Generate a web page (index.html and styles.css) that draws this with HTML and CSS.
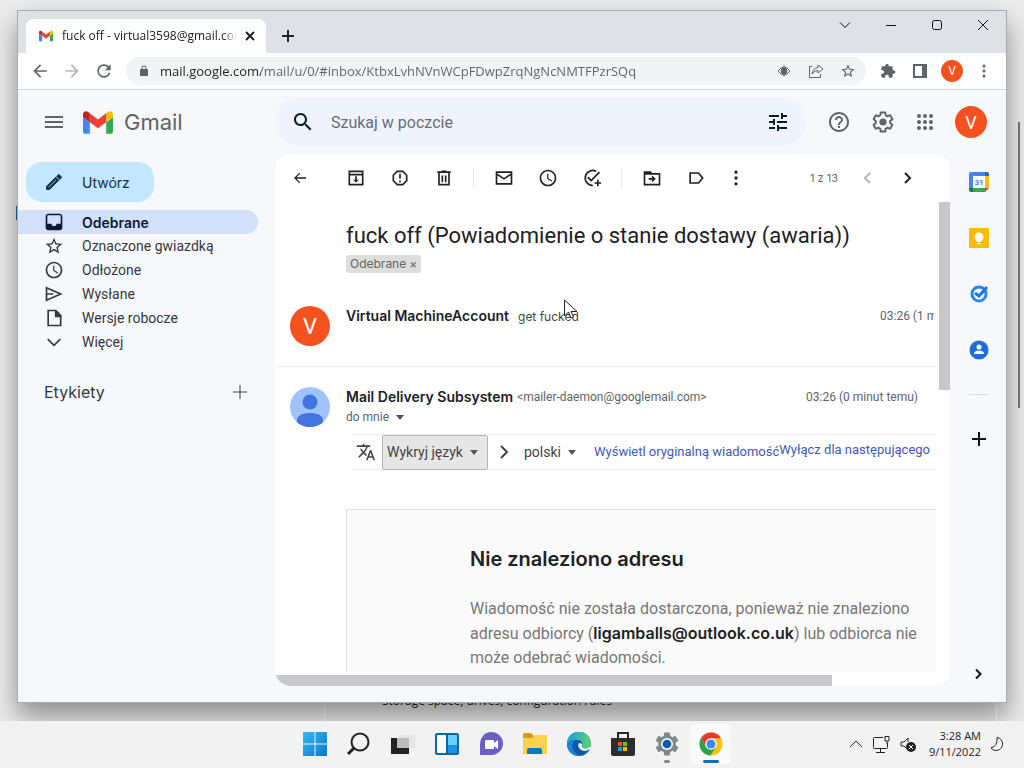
FILE: index.html
```html
<!DOCTYPE html>
<html lang="pl">
<head>
    <meta charset="utf-8">
    <title>Gmail</title>
    <link rel="stylesheet" href="styles.css">
</head>
<body>
<div class="desktop">
    <!-- Settings window behind the browser -->
    <div class="back-window">
        <div class="back-panel">Storage space, drives, configuration rules</div>
        <div class="back-scroll"></div>
    </div>
    <div class="back-marker"></div>

    <div class="window">
        <div class="tab-strip">
            <div class="tab">
                <svg class="favicon" viewBox="52 42 88 66"><path fill="#4285f4" d="M58 108h14V74L52 59v43c0 3.32 2.69 6 6 6"/><path fill="#34a853" d="M120 108h14c3.32 0 6-2.69 6-6V59l-20 15"/><path fill="#fbbc04" d="M120 48v26l20-15v-8c0-7.42-8.47-11.65-14.4-7.2"/><path fill="#ea4335" d="M72 74V48l24 18 24-18v26L96 92"/><path fill="#c5221f" d="M52 51v8l20 15V48l-5.6-4.2c-5.94-4.45-14.4-.22-14.4 7.2"/></svg>
                <span class="tab-title">fuck off - virtual3598@gmail.com - Gmail</span>
                <button class="tab-close" aria-label="Zamknij kartę"><svg class="i16" viewBox="0 0 16 16"><path class="line" d="M4 4l8 8M12 4l-8 8"/></svg></button>
            </div>
            <button class="new-tab" aria-label="Nowa karta"><svg class="i16" viewBox="0 0 16 16"><path class="line" d="M8 2v12M2 8h12"/></svg></button>
            <div class="window-controls">
                <button aria-label="Szukaj kart"><svg class="i16" viewBox="0 0 16 16"><path class="thin" d="M3 5.500l5 5 5-5"/></svg></button>
                <button aria-label="Minimalizuj"><svg class="i16" viewBox="0 0 16 16"><path class="thin" d="M3 8.500h10"/></svg></button>
                <button aria-label="Maksymalizuj"><svg class="i16" viewBox="0 0 16 16"><rect class="thin" x="3.500" y="3.500" width="9" height="9" rx="2"/></svg></button>
                <button aria-label="Zamknij"><svg class="i16" viewBox="0 0 16 16"><path class="thin" d="M3 3l10 10M13 3L3 13"/></svg></button>
            </div>
        </div>

        <div class="browser-bar">
            <button aria-label="Wstecz"><svg class="i20" viewBox="0 0 24 24"><path d="M20 11H7.830l5.590-5.590L12 4l-8 8 8 8 1.410-1.410L7.830 13H20v-2z"/></svg></button>
            <button class="disabled" aria-label="Dalej"><svg class="i20" viewBox="0 0 24 24"><path d="M12 4l-1.410 1.410L16.170 11H4v2h12.170l-5.580 5.590L12 20l8-8z"/></svg></button>
            <button aria-label="Odśwież"><svg class="i20" viewBox="0 0 24 24"><path d="M17.65 6.35C16.2 4.9 14.21 4 12 4c-4.42 0-7.99 3.58-7.99 8s3.57 8 7.99 8c3.73 0 6.84-2.55 7.73-6h-2.08c-.82 2.33-3.04 4-5.65 4-3.31 0-6-2.69-6-6s2.69-6 6-6c1.66 0 3.14.69 4.22 1.78L13 11h7V4l-2.35 2.35z"/></svg></button>
            <div class="omnibox">
                <svg class="i12" viewBox="0 0 24 24"><path d="M18 8h-1V6c0-2.760-2.240-5-5-5S7 3.240 7 6v2H6c-1.100 0-2 .9-2 2v10c0 1.100.9 2 2 2h12c1.100 0 2-.9 2-2V10c0-1.100-.9-2-2-2zM9 8V6c0-1.660 1.340-3 3-3s3 1.340 3 3v2H9z"/></svg>
                <input class="url" type="text" aria-label="Adres" value="mail.google.com/mail/u/0/#inbox/KtbxLvhNVnWCpFDwpZrqNgNcNMTFPzrSQq">
                <button aria-label="Śledzenie"><svg class="i16" viewBox="0 0 16 16"><path class="line-s" d="M2 8q6-8 12 0q-6 8-12 0z"/><circle cx="8" cy="8" r="3.200"/><path class="line-s" d="M8 2.500v11"/></svg></button>
                <button aria-label="Udostępnij"><svg class="i16" viewBox="0 0 16 16"><path class="line-s" d="M4 3.500H1.500v11h11V11M10 2l5 4-5 4V7.500Q6 7.500 4 11 5 5 10 4.500z"/></svg></button>
                <button aria-label="Dodaj zakładkę"><svg class="i16" viewBox="0 0 24 24"><path d="M22 9.240l-7.190-.62L12 2 9.190 8.630 2 9.240l5.460 4.730L5.820 21 12 17.270 18.180 21l-1.630-7.030L22 9.240zM12 15.400l-3.760 2.270 1-4.280-3.320-2.880 4.380-.38L12 6.100l1.710 4.040 4.380.38-3.320 2.880 1 4.280L12 15.400z"/></svg></button>
            </div>
            <button aria-label="Rozszerzenia"><svg class="i16" viewBox="0 0 24 24"><path d="M20.5 11H19V7c0-1.100-.9-2-2-2h-4V3.500C13 2.120 11.880 1 10.500 1S8 2.120 8 3.500V5H4c-1.100 0-1.990.9-1.990 2v3.800H3.500c1.490 0 2.700 1.210 2.700 2.700s-1.210 2.700-2.700 2.700H2V20c0 1.100.9 2 2 2h3.800v-1.500c0-1.490 1.210-2.700 2.700-2.700 1.490 0 2.700 1.210 2.700 2.700V22H17c1.100 0 2-.9 2-2v-4h1.500c1.380 0 2.500-1.120 2.500-2.500S21.880 11 20.500 11z"/></svg></button>
            <button aria-label="Panel boczny"><svg class="i16" viewBox="0 0 16 16"><path fill-rule="evenodd" d="M1 1h14v14H1zM3 3v10h7V3z"/></svg></button>
            <button aria-label="Profil"><span class="avatar small">V</span></button>
            <button aria-label="Menu"><svg class="i16" viewBox="0 0 16 16"><circle cx="8" cy="3" r="1.500"/><circle cx="8" cy="8" r="1.500"/><circle cx="8" cy="13" r="1.500"/></svg></button>
        </div>

        <div class="gmail">
            <header class="header">
                <div class="brand">
                    <button aria-label="Menu główne"><svg class="i20" viewBox="0 0 20 20"><path class="line" d="M1 5h18M1 10h18M1 15h18"/></svg></button>
                    <svg class="logo" viewBox="52 42 88 66"><path fill="#4285f4" d="M58 108h14V74L52 59v43c0 3.32 2.69 6 6 6"/><path fill="#34a853" d="M120 108h14c3.32 0 6-2.69 6-6V59l-20 15"/><path fill="#fbbc04" d="M120 48v26l20-15v-8c0-7.42-8.47-11.65-14.4-7.2"/><path fill="#ea4335" d="M72 74V48l24 18 24-18v26L96 92"/><path fill="#c5221f" d="M52 51v8l20 15V48l-5.6-4.2c-5.94-4.45-14.4-.22-14.4 7.2"/></svg>
                    <span class="brand-name">Gmail</span>
                </div>
                <form class="search">
                    <button type="button" aria-label="Szukaj"><svg class="i24" viewBox="0 0 24 24"><path d="M15.500 14h-.79l-.28-.27C15.410 12.590 16 11.110 16 9.500 16 5.910 13.090 3 9.500 3S3 5.910 3 9.500 5.910 16 9.500 16c1.610 0 3.090-.59 4.230-1.570l.27.28v.79l5 4.990L20.490 19l-4.990-5zm-6 0C7.010 14 5 11.990 5 9.500S7.010 5 9.500 5 14 7.010 14 9.500 11.990 14 9.500 14z"/></svg></button>
                    <input type="search" placeholder="Szukaj w poczcie" aria-label="Szukaj w poczcie">
                    <button type="button" aria-label="Opcje wyszukiwania"><svg class="i24" viewBox="0 0 24 24"><path d="M3 17v2h6v-2H3zM3 5v2h10V5H3zm10 16v-2h8v-2h-8v-2h-2v6h2zM7 9v2H3v2h4v2h2V9H7zm14 4v-2H11v2h10zm-6-4h2V7h4V5h-4V3h-2v6z"/></svg></button>
                </form>
                <div class="header-tools">
                    <button aria-label="Pomoc"><svg class="i24" viewBox="0 0 24 24"><path d="M11 18h2v-2h-2v2zm1-16C6.480 2 2 6.480 2 12s4.480 10 10 10 10-4.480 10-10S17.520 2 12 2zm0 18c-4.410 0-8-3.590-8-8s3.590-8 8-8 8 3.590 8 8-3.590 8-8 8zm0-14c-2.210 0-4 1.790-4 4h2c0-1.100.9-2 2-2s2 .9 2 2c0 2-3 1.750-3 5h2c0-2.250 3-2.500 3-5 0-2.210-1.790-4-4-4z"/></svg></button>
                    <button aria-label="Ustawienia"><svg class="i24" viewBox="0 0 24 24"><path class="line" d="M19.14 12.94c.04-.3.06-.61.06-.94 0-.32-.02-.64-.07-.94l2.03-1.58c.18-.14.23-.41.12-.61l-1.92-3.32c-.12-.22-.37-.29-.59-.22l-2.39.96c-.5-.38-1.03-.7-1.62-.94l-.36-2.54c-.04-.24-.24-.41-.48-.41h-3.84c-.24 0-.43.17-.47.41l-.36 2.54c-.59.24-1.13.57-1.62.94l-2.39-.96c-.22-.08-.47 0-.59.22L2.74 8.87c-.12.21-.08.47.12.61l2.03 1.58c-.05.3-.09.63-.09.94s.02.64.07.94l-2.03 1.58c-.18.14-.23.41-.12.61l1.92 3.32c.12.22.37.29.59.22l2.39-.96c.5.38 1.03.7 1.62.94l.36 2.54c.05.24.24.41.48.41h3.84c.24 0 .44-.17.47-.41l.36-2.54c.59-.24 1.13-.56 1.62-.94l2.39.96c.22.08.47 0 .59-.22l1.92-3.32c.12-.22.07-.47-.12-.61z"/><circle cx="12" cy="12" r="3.600"/></svg></button>
                    <button class="apps-grid" aria-label="Aplikacje Google"><svg class="i24" viewBox="0 0 24 24"><path class="dots" d="M6 6h0M12 6h0M18 6h0M6 12h0M12 12h0M18 12h0M6 18h0M12 18h0M18 18h0"/></svg></button>
                    <button class="account" aria-label="Konto"><span class="avatar medium">V</span></button>
                </div>
            </header>

            <nav class="sidebar">
                <button class="compose"><svg class="i20" viewBox="0 0 24 24"><path class="pen" d="M14.060 9.020l.92.92L5.920 19H5v-.92l9.060-9.060M17.660 3c-.25 0-.51.1-.7.29l-1.830 1.830 3.750 3.750 1.830-1.830c.39-.39.39-1.020 0-1.410l-2.340-2.340c-.2-.2-.45-.29-.71-.29zm-3.600 3.190L3 17.250V21h3.750L17.810 9.940l-3.750-3.750z"/></svg>Utwórz</button>
                <a class="nav-item active" href="#"><svg class="i20" viewBox="0 0 24 24"><path d="M19 2H5C3.500 2 2 3.500 2 5v14c0 1.500 1.500 3 3 3h14c1.500 0 3-1.500 3-3V5c0-1.500-1.500-3-3-3zm1 12h-5c0 1.660-1.350 3-3 3s-3-1.340-3-3H4V4h16v10z"/></svg>Odebrane</a>
                <a class="nav-item" href="#"><svg class="i20" viewBox="0 0 24 24"><path d="M22 9.240l-7.190-.62L12 2 9.190 8.630 2 9.240l5.460 4.730L5.820 21 12 17.270 18.180 21l-1.630-7.030L22 9.240zM12 15.400l-3.760 2.270 1-4.280-3.320-2.880 4.380-.38L12 6.100l1.710 4.040 4.380.38-3.320 2.880 1 4.280L12 15.400z"/></svg>Oznaczone gwiazdką</a>
                <a class="nav-item" href="#"><svg class="i20" viewBox="0 0 24 24"><path d="M11.990 2C6.470 2 2 6.480 2 12s4.470 10 9.990 10C17.520 22 22 17.520 22 12S17.520 2 11.990 2zM12 20c-4.420 0-8-3.580-8-8s3.580-8 8-8 8 3.580 8 8-3.580 8-8 8zm.5-13H11v6l5.250 3.150.75-1.230-4.500-2.670z"/></svg>Odłożone</a>
                <a class="nav-item" href="#"><svg class="i20" viewBox="0 0 24 24"><path class="line" d="M3 4.500L20 12 3 19.500zM3 12h8"/></svg>Wysłane</a>
                <a class="nav-item" href="#"><svg class="i20" viewBox="0 0 24 24"><path class="line" d="M5 3h9l6 6v12H5z"/><path d="M13 3h2l6 6v2h-8z"/></svg>Wersje robocze</a>
                <a class="nav-item" href="#"><svg class="i20" viewBox="0 0 24 24"><path class="line" d="M4.500 8.500L12 16l7.500-7.500"/></svg>Więcej</a>
                <div class="labels"><span>Etykiety</span><button aria-label="Utwórz etykietę"><svg class="i20" viewBox="0 0 20 20"><path class="line-s" d="M10 3v14M3 10h14"/></svg></button></div>
            </nav>

            <main class="card">
                <div class="actions">
                    <button class="back" aria-label="Wstecz do: Odebrane"><svg class="i16" viewBox="0 0 24 24"><path d="M21 11H6.830l5.590-5.590L11 4l-8 8 8 8 1.410-1.410L6.830 13H21v-2z"/></svg></button>
                    <button aria-label="Archiwizuj"><svg class="i20" viewBox="0 0 24 24"><path class="line" d="M4 4h16v16H4zM4 8h16"/><path d="M11 10h2v4h2.500L12 17.500 8.500 14H11z"/></svg></button>
                    <button aria-label="Zgłoś spam"><svg class="i20" viewBox="0 0 24 24"><path class="line" d="M8.700 4h6.600L20 8.700v6.600L15.300 20H8.700L4 15.300V8.700z"/><path d="M11 7h2v6h-2zM11 15h2v2h-2z"/></svg></button>
                    <button aria-label="Usuń"><svg class="i20" viewBox="0 0 24 24"><path class="line" d="M6 6v14h12V6M4 5h16M9 4h6M10 9v8M14 9v8"/></svg></button>
                    <span class="separator"></span>
                    <button aria-label="Oznacz jako nieprzeczytane"><svg class="i20" viewBox="0 0 24 24"><path class="line" d="M3 5h18v14H3zM3 7l9 6 9-6"/></svg></button>
                    <button aria-label="Odłóż"><svg class="i20" viewBox="0 0 24 24"><path d="M11.990 2C6.470 2 2 6.480 2 12s4.470 10 9.990 10C17.520 22 22 17.520 22 12S17.520 2 11.990 2zM12 20c-4.420 0-8-3.580-8-8s3.580-8 8-8 8 3.580 8 8-3.580 8-8 8zm.5-13H11v6l5.250 3.150.75-1.230-4.500-2.670z"/></svg></button>
                    <button aria-label="Dodaj do Zadań"><svg class="i20" viewBox="0 0 24 24"><path class="line" d="M17 4A9 9 0 1 0 13 21M7 11l4 4L21 5M19 14v8M15 18h8"/></svg></button>
                    <span class="separator"></span>
                    <button aria-label="Przenieś do"><svg class="i20" viewBox="0 0 24 24"><path class="line" d="M3 5h7l2 2h9v13H3zM8 13h6M12 10l3 3-3 3"/><path d="M3 5h7l2 3H3z"/></svg></button>
                    <button aria-label="Etykiety"><svg class="i20" viewBox="0 0 24 24"><path class="line" d="M5 6h10l5 6-5 6H5z"/></svg></button>
                    <button class="more" aria-label="Więcej"><svg class="i20" viewBox="0 0 24 24"><path class="dots" d="M12 5h0M12 12h0M12 19h0"/></svg></button>
                    <span class="count">1 z 13</span>
                    <button class="pager disabled" aria-label="Nowsze"><svg class="i16" viewBox="0 0 16 16"><path class="line" d="M10 3L5 8l5 5"/></svg></button>
                    <button class="pager" aria-label="Starsze"><svg class="i16" viewBox="0 0 16 16"><path class="line" d="M5 3l5 5-5 5"/></svg></button>
                </div>

                <div class="scroll-area">
                    <div class="thread">
                        <h1>fuck off (Powiadomienie o stanie dostawy (awaria))</h1>
                        <span class="chip">Odebrane <button aria-label="Usuń etykietę">×</button></span>

                        <article class="message collapsed">
                            <span class="avatar large">V</span>
                            <div class="message-head">
                                <strong>Virtual MachineAccount</strong>
                                <span class="snippet">get fucked</span>
                                <time>03:26 (1 minutę temu)</time>
                            </div>
                        </article>

                        <article class="message">
                            <svg class="person" viewBox="0 0 40 40"><defs><clipPath id="round"><circle cx="20" cy="20" r="20"/></clipPath></defs><g clip-path="url(#round)"><path fill="#a0c3ff" d="M0 0h40v40H0z"/><circle cx="20" cy="15" r="7.500" fill="#4374e0"/><path fill="#4374e0" d="M7 40v-8q2-6 13-6t13 6v8z"/></g></svg>
                            <div class="message-main">
                                <div class="message-head">
                                    <strong>Mail Delivery Subsystem</strong>
                                    <span class="address">&lt;mailer-daemon@googlemail.com&gt;</span>
                                    <time>03:26 (0 minut temu)</time>
                                </div>
                                <button class="recipient">do mnie</button>
                                <div class="translate">
                                    <svg class="i20" viewBox="0 0 24 24"><path d="M12.870 15.070l-2.540-2.510.03-.03c1.740-1.940 2.980-4.170 3.710-6.530H17V4h-7V2H8v2H1v1.990h11.170C11.500 7.920 10.440 9.750 9 11.350 8.070 10.320 7.300 9.190 6.690 8h-2c.73 1.630 1.730 3.170 2.980 4.560l-5.090 5.020L4 19l5-5 3.110 3.110.76-2.040zM18.500 10h-2L12 22h2l1.120-3h4.750L21 22h2l-4.500-12zm-2.620 7l1.620-4.330L19.120 17h-3.240z"/></svg>
                                    <label class="picker boxed"><select aria-label="Język źródłowy"><option>Wykryj język</option></select></label>
                                    <svg class="i16 to" viewBox="0 0 16 16"><path class="line" d="M5 2l6 6-6 6"/></svg>
                                    <label class="picker"><select aria-label="Język docelowy"><option>polski</option></select></label>
                                    <a class="original" href="#">Wyświetl oryginalną wiadomość</a>
                                    <a class="turn-off" href="#">Wyłącz dla następującego</a>
                                </div>
                                <div class="bounce">
                                    <h2>Nie znaleziono adresu</h2>
                                    <p>Wiadomość nie została dostarczona, ponieważ nie znaleziono adresu odbiorcy (<b>ligamballs@outlook.co.uk</b>) lub odbiorca nie może odebrać wiadomości.</p>
                                </div>
                            </div>
                        </article>
                    </div>
                    <div class="scroll-y"></div>
                </div>
                <div class="scroll-x"></div>
            </main>

            <aside class="side-panel">
                <button aria-label="Kalendarz"><svg class="i20" viewBox="0 0 20 20"><path fill="#4285f4" d="M0 2q0-2 2-2h14v4H4v12H0z"/><path fill="#1967d2" d="M16 0h2q2 0 2 2v2h-4z"/><path fill="#fbbc04" d="M16 4h4v12h-4z"/><path fill="#34a853" d="M4 16h12v4H4z"/><path fill="#188038" d="M0 16h4v4H2q-2 0-2-2z"/><path fill="#ea4335" d="M16 16h4l-4 4z"/><path fill="#fff" d="M4 4h12v12H4z"/><text x="10" y="13" text-anchor="middle" class="cal-day">31</text></svg></button>
                <button aria-label="Keep"><svg class="i20" viewBox="0 0 20 20"><rect width="20" height="20" rx="1" fill="#fbbc04"/><circle cx="10" cy="9" r="4.500" fill="#fff"/><path fill="#fff" d="M8 12h4v2H8zM8 15h4v1H8z"/></svg></button>
                <button aria-label="Lista zadań"><svg class="i20" viewBox="0 0 20 20"><circle cx="10" cy="10" r="7" fill="#fff" stroke="#2684fc" stroke-width="3"/><path fill="none" stroke="#1a73e8" stroke-width="3" d="M6 9l4 3 8-9"/></svg></button>
                <button aria-label="Kontakty"><svg class="i20" viewBox="0 0 20 20"><circle cx="10" cy="10" r="9.500" fill="#1a6fdc"/><circle cx="10" cy="7" r="2.500" fill="#fff"/><path fill="#fff" d="M5 14q0-3.500 5-3.500t5 3.500z"/></svg></button>
                <hr>
                <button aria-label="Pobierz dodatki"><svg class="i20" viewBox="0 0 20 20"><path class="line" d="M10 3v14M3 10h14"/></svg></button>
                <button class="collapse" aria-label="Ukryj panel boczny"><svg class="i16" viewBox="0 0 16 16"><path class="line" d="M5 3.500L9.500 8 5 12.500"/></svg></button>
            </aside>
        </div>
    </div>

    <svg class="cursor" viewBox="0 0 14 22"><path fill="#fff" stroke="#222" d="M.5 1v16l4-4 2.500 6 2.500-1L7 12.500h6z"/></svg>

    <footer class="taskbar">
        <div class="apps">
            <button aria-label="Start"><svg class="i24" viewBox="0 0 24 24"><defs><linearGradient id="win" x2="1" y2="1"><stop stop-color="#35b9f1"/><stop offset="1" stop-color="#0a78d0"/></linearGradient></defs><path fill="url(#win)" d="M0 0h11.500v11.500H0zM12.500 0H24v11.500H12.500zM0 12.500h11.500V24H0zM12.500 12.500H24V24H12.500z"/></svg></button>
            <button aria-label="Szukaj"><svg class="i24" viewBox="0 0 24 24"><circle class="line" cx="13" cy="10" r="8.500"/><path class="line thick" d="M7 16l-6 6"/></svg></button>
            <button aria-label="Widok zadań"><svg class="i24" viewBox="0 0 24 24"><path fill="#e6e6e6" d="M8 3h16v13H8z"/><path fill="#222" d="M0 6h18v16H0z"/><path fill="#bbb" d="M6 6h12v10H6z"/></svg></button>
            <button aria-label="Widżety"><svg class="i24" viewBox="0 0 24 24"><rect y="1" width="24" height="22" rx="2" fill="#17659e"/><rect x="2" y="3" width="9" height="18" rx="1" fill="#fff"/><path fill="#65d2fb" d="M13 3h9v10h-9z"/><path fill="#1693e6" d="M13 13h9v8h-9z"/></svg></button>
            <button aria-label="Czat"><svg class="i24" viewBox="0 0 24 24"><path fill="#6a5fc4" d="M1 23V12A11.500 11.500 0 1 1 12.500 23z"/><rect x="6" y="8" width="9" height="9" rx="1" fill="#fff"/><path fill="#fff" d="M15 11l4-3v9l-4-3z"/></svg></button>
            <button aria-label="Eksplorator plików"><svg class="i24" viewBox="0 0 24 24"><path fill="#d99a1b" d="M0 3q0-2 2-2h6l3 3v5H0z"/><path fill="#fbd04a" d="M0 6h9l3-3h12v19H0z"/><path fill="#1673bd" d="M4 22v-4q0-2 2-2h11q2 0 2 2v4z"/></svg></button>
            <button aria-label="Edge"><svg class="i24" viewBox="0 0 24 24"><defs><linearGradient id="edge" x2="1"><stop stop-color="#1b9de2"/><stop offset="1" stop-color="#5fd36a"/></linearGradient></defs><circle cx="12" cy="12" r="12" fill="#0c59a4"/><path fill="url(#edge)" d="M0 12A12 12 0 0 1 24 11q0 6-6 6-4 0-3-3 1-6-5-6Q3 8 0 13z"/><path fill="#1683d8" d="M0 12q3-5 8-4-4 4-2 9 2 5 7 7Q1 24 0 12z"/><path fill="#f2f2f2" d="M12 11q-2 3 1 6 4 4 10 0l1-3q-4 4-8 2-2-1-1-3 0-2-3-2z"/></svg></button>
            <button aria-label="Microsoft Store"><svg class="i24" viewBox="0 0 24 24"><path fill="none" stroke="#252525" stroke-width="2" d="M7 7V1h10v6"/><path fill="#2d2d2d" d="M0 6h24v16q0 2-2 2H2q-2 0-2-2z"/><path fill="#f25022" d="M7 10h4v4H7z"/><path fill="#7fba00" d="M12 10h4v4h-4z"/><path fill="#00a4ef" d="M7 15h4v4H7z"/><path fill="#ffb900" d="M12 15h4v4h-4z"/></svg></button>
            <button class="running" aria-label="Ustawienia"><svg class="i24" viewBox="2 2 20 20"><path fill="#7f868c" d="M19.14 12.94c.04-.3.06-.61.06-.94 0-.32-.02-.64-.07-.94l2.03-1.58c.18-.14.23-.41.12-.61l-1.92-3.32c-.12-.22-.37-.29-.59-.22l-2.39.96c-.5-.38-1.03-.7-1.62-.94l-.36-2.54c-.04-.24-.24-.41-.48-.41h-3.84c-.24 0-.43.17-.47.41l-.36 2.54c-.59.24-1.13.57-1.62.94l-2.39-.96c-.22-.08-.47 0-.59.22L2.74 8.87c-.12.21-.08.47.12.61l2.03 1.58c-.05.3-.09.63-.09.94s.02.64.07.94l-2.03 1.58c-.18.14-.23.41-.12.61l1.92 3.32c.12.22.37.29.59.22l2.39-.96c.5.38 1.03.7 1.62.94l.36 2.54c.05.24.24.41.48.41h3.84c.24 0 .44-.17.47-.41l.36-2.54c.59-.24 1.13-.56 1.62-.94l2.39.96c.22.08.47 0 .59-.22l1.92-3.32c.12-.22.07-.47-.12-.61z"/><circle cx="12" cy="12" r="5" fill="#f2f2f2"/><circle cx="12" cy="12" r="3.600" fill="#0f5da6"/></svg></button>
            <button class="running current" aria-label="Chrome"><svg class="i24" viewBox="0 0 24 24"><circle cx="12" cy="12" r="11.500" fill="#fbc116"/><path fill="#e33b2e" d="M2 6.300A11.500 11.500 0 0 1 22 6.300H12L7 15z"/><path fill="#2ba24c" d="M2 6.300A11.500 11.500 0 0 0 11.500 23.500L17 15H7z"/><circle cx="12" cy="12" r="5.800" fill="#fff"/><circle cx="12" cy="12" r="4.500" fill="#4285f4"/></svg></button>
        </div>
        <div class="tray">
            <svg class="i16" viewBox="0 0 16 16"><path class="thin" d="M2 11l6-6 6 6"/></svg>
            <svg class="i20" viewBox="0 0 20 20"><path class="thin" d="M12 3.500H3.500q-1 0-1 1v9q0 1 1 1h12q1 0 1-1V9M9.500 15v3M5 18.500h9M14 2.500h4V7h-4zM16 7v3"/></svg>
            <svg class="i20" viewBox="0 0 20 20"><path class="thin" d="M8 14l-2-2H3V8h3l4-4v4"/><circle cx="13" cy="13" r="5" fill="#222"/><path stroke="#fff" d="M11 11l4 4M15 11l-4 4"/></svg>
            <div class="clock"><span>3:28 AM</span><span>9/11/2022</span></div>
            <svg class="i16" viewBox="0 0 16 16"><path class="thin" d="M8 1.500A6.500 6.500 0 1 1 2 12Q9 10 8 1.500z"/></svg>
        </div>
    </footer>
</div>
</body>
</html>
```

FILE: styles.css
```css
* {
    box-sizing: border-box;
}
body {
    margin: 0;
    font-family: Roboto, "Liberation Sans", sans-serif;
    font-size: 14px;
    color: #202124;
}
button {
    display: flex;
    align-items: center;
    justify-content: center;
    padding: 0;
    border: none;
    background: none;
    color: inherit;
    font: inherit;
    cursor: pointer;
}
input, select {
    border: none;
    outline: none;
    padding: 0;
    background: none;
    font: inherit;
    color: inherit;
}
a {
    text-decoration: none;
}
svg {
    display: block;
    flex: none;
    fill: currentColor;
}

/* icon sizes and strokes */
.i12 { width: 12px; height: 12px; }
.i16 { width: 16px; height: 16px; }
.i20 { width: 20px; height: 20px; }
.i24 { width: 24px; height: 24px; }
.line, .line-s, .thin, .dots {
    fill: none;
    stroke: currentColor;
}
.line { stroke-width: 2; }
.thick { stroke-width: 3; }
.pen { stroke: currentColor; }
.dots {
    stroke-width: 4;
    stroke-linecap: round;
}

.avatar {
    display: flex;
    align-items: center;
    justify-content: center;
    flex: none;
    border-radius: 50%;
    background: #f4511e;
    color: #fff;
}
.small { width: 22px; height: 22px; font-size: 12px; }
.medium { width: 32px; height: 32px; font-size: 18px; }
.large { width: 40px; height: 40px; font-size: 22px; }

/* desktop */
.desktop {
    position: relative;
    height: 100vh;
    overflow: hidden;
    display: flex;
    flex-direction: column;
    background: #ececec;
}
.back-window {
    flex: 1;
    display: flex;
    align-items: flex-end;
    padding: 0 4px 0 324px;
}
.back-panel {
    flex: 1;
    margin-right: 21px;
    padding: 0 57px 11px;
    border: 1px solid #fff;
    border-width: 0 1px;
    font: 12px/18px "Open Sans", sans-serif;
}
.back-scroll {
    width: 2px;
    height: 286px;
    margin-bottom: 313px;
    background: #777;
}
.back-marker {
    position: absolute;
    left: 16px;
    top: 206px;
    width: 3px;
    height: 14px;
    background: #1a6a9c;
}
.window {
    position: absolute;
    inset: 10px 17px 65px;
    display: flex;
    flex-direction: column;
    border: 1px solid #a9abad;
    background: #f6f8fc;
    box-shadow: 0 14px 26px rgba(0, 0, 0, 0.4);
}
.cursor {
    position: absolute;
    left: 564px;
    top: 299px;
    width: 14px;
    height: 22px;
}

/* browser chrome */
.tab-strip {
    display: flex;
    height: 42px;
    padding-left: 8px;
    background: #dee1e6;
}
.tab {
    display: flex;
    align-items: center;
    width: 240px;
    margin-top: 8px;
    padding: 0 8px 0 13px;
    border-radius: 8px 8px 0 0;
    background: #fff;
}
.favicon {
    width: 14px;
    height: 12px;
}
.tab-title {
    flex: 1;
    margin: 0 5px 0 9px;
    overflow: hidden;
    white-space: nowrap;
    font: 12px/16px "Open Sans", sans-serif;
    mask-image: linear-gradient(to right, #000 92%, transparent);
}
.new-tab {
    width: 28px;
    height: 34px;
    margin: 8px 0 0 8px;
}
.window-controls {
    display: flex;
    margin-left: auto;
    color: #111;
}
.window-controls button {
    width: 46px;
    height: 28px;
}
.browser-bar {
    display: flex;
    align-items: center;
    height: 37px;
    padding: 0 6px;
    border-bottom: 1px solid #d5d7da;
    background: #fff;
    color: #5f6368;
}
.browser-bar button {
    width: 32px;
    height: 28px;
}
.browser-bar .disabled {
    color: #b4b7ba;
}
.omnibox {
    flex: 1;
    display: flex;
    align-items: center;
    height: 28px;
    margin: 0 6px;
    padding: 0 2px 0 12px;
    border-radius: 14px;
    background: #f1f3f4;
}
.url {
    flex: 1;
    min-width: 0;
    margin-left: 10px;
    font: 13px/20px "Open Sans", sans-serif;
    color: transparent;
    background: linear-gradient(to right, #202124 101px, #5f6368 101px);
    background-clip: text;
    -webkit-background-clip: text;
}

/* gmail */
.gmail {
    flex: 1;
    min-height: 0;
    display: grid;
    grid-template-columns: 257px 1fr 56px;
    grid-template-rows: 64px 1fr;
    padding-bottom: 16px;
}
.header {
    grid-column: 1 / 4;
    display: flex;
    align-items: center;
    color: #5f6368;
}
.brand {
    display: flex;
    align-items: center;
    width: 257px;
    padding-left: 26px;
}
.logo {
    width: 30px;
    height: 23px;
    margin: 0 11px 0 19px;
}
.brand-name {
    font: 22px/28px Inter, sans-serif;
}
.search {
    flex: 1;
    display: flex;
    align-items: center;
    height: 48px;
    padding: 0 16px;
    border-radius: 24px;
    background: #eff3fd;
}
.search input {
    flex: 1;
    min-width: 0;
    margin: 0 16px;
    font-size: 16px;
}
.search input::placeholder {
    color: #6a6e73;
}
.search button {
    color: #041e30;
}
.header-tools {
    display: flex;
    padding: 0 9px 0 11px;
}
.header-tools button {
    width: 44px;
    height: 40px;
}
.header-tools .apps-grid {
    width: 40px;
}
.header-tools .account {
    width: 52px;
}

.sidebar {
    padding-top: 8px;
    color: #36383c;
}
.compose {
    gap: 18px;
    height: 40px;
    margin: 0 0 8px 8px;
    padding: 0 24px 0 18px;
    border-radius: 16px;
    background: #c2e7ff;
    color: #0b2f4d;
    font-family: Inter, sans-serif;
}
.nav-item {
    display: flex;
    align-items: center;
    gap: 18px;
    height: 24px;
    margin-right: 17px;
    padding-left: 26px;
    border-radius: 0 12px 12px 0;
    color: inherit;
}
.active {
    background: #d3e0fb;
    color: #0b1b35;
    font-family: Inter, sans-serif;
    font-weight: 600;
}
.labels {
    display: flex;
    align-items: center;
    justify-content: space-between;
    height: 36px;
    margin-top: 20px;
    padding: 0 25px 0 26px;
    font: 16px/24px Inter, sans-serif;
}

.card {
    display: flex;
    flex-direction: column;
    min-width: 0;
    min-height: 0;
    overflow: hidden;
    border-radius: 16px;
    background: #fff;
}
.actions {
    display: flex;
    align-items: center;
    height: 48px;
    padding: 0 22px 0 3px;
}
.actions button {
    width: 44px;
    height: 40px;
}
.actions .back {
    margin-right: 12px;
}
.actions .more {
    width: 36px;
}
.actions .pager {
    width: 40px;
}
.actions .disabled {
    color: #b4b7ba;
}
.separator {
    width: 1px;
    height: 20px;
    margin: 0 8px 0 7px;
    background: #e8eaed;
}
.count {
    margin: 0 10px 0 auto;
    font: 11px/16px Inter, sans-serif;
    color: #6a6e73;
}

.scroll-area {
    flex: 1;
    min-height: 0;
    display: flex;
    gap: 3px;
}
.thread {
    flex: 1;
    min-width: 0;
    overflow: hidden;
    padding-top: 20px;
}
.thread h1 {
    margin: 0 0 5px 71px;
    font-size: 22px;
    line-height: 28px;
    font-weight: 400;
    white-space: nowrap;
}
.chip {
    display: flex;
    width: max-content;
    margin-left: 71px;
    padding: 0 4px;
    border-radius: 2px;
    background: #ddd;
    font: 12px/18px Inter, sans-serif;
    color: #666;
}
.chip button {
    margin-left: 3px;
}
.message {
    display: flex;
    gap: 16px;
    padding: 20px 0 0 15px;
}
.collapsed {
    height: 94px;
    padding-top: 33px;
    border-bottom: 1px solid #eceef1;
}
.message-main {
    flex: 1;
    min-width: 0;
}
.message-head {
    flex: 1;
    display: flex;
    align-items: center;
    height: 20px;
    min-width: 0;
    white-space: nowrap;
    font-size: 12px;
    color: #5f6368;
}
.message-head strong {
    font: 600 14px/20px Inter, sans-serif;
    color: #202124;
}
.snippet {
    margin-left: 9px;
    font-family: Inter, sans-serif;
    color: #444;
}
.address {
    margin-left: 4px;
}
.message-head time {
    margin: 0 18px 0 auto;
}
.collapsed time {
    width: 54px;
    margin-right: 2px;
    overflow: hidden;
}
.person {
    width: 40px;
    height: 40px;
}
.recipient {
    height: 20px;
    font-size: 12px;
    color: #5f6368;
}
.recipient::after, .picker::after {
    content: "";
    margin-left: 7px;
    border: 4px solid transparent;
    border-top: 5px solid #555;
    border-bottom: none;
}
.translate {
    display: flex;
    align-items: center;
    height: 34px;
    margin: 8px 0 40px 6px;
    padding-left: 4px;
    box-shadow: 0 -1px #eee, 0 1px #eee;
    white-space: nowrap;
    color: #444;
}
.picker {
    display: flex;
    align-items: center;
}
.picker select {
    appearance: none;
}
.boxed {
    height: 35px;
    margin-left: 6px;
    padding: 0 9px 0 4px;
    border: 1px solid #b5b5b5;
    border-radius: 2px;
    background: #e6e6e6;
}
.to {
    margin: 0 12px 0 8px;
}
.translate a {
    font-size: 13px;
    line-height: 18px;
    color: #4358b5;
}
.original {
    margin-left: 18px;
}
.turn-off {
    padding-bottom: 4px;
}
.bounce {
    min-height: 240px;
    padding: 35px 0 0 123px;
    border: 1px solid #e0e0e0;
    border-right: none;
    background: #fafafa;
}
.bounce h2 {
    margin: 0 0 24px;
    font: 600 20px/28px Inter, sans-serif;
}
.bounce p {
    max-width: 460px;
    margin: 0;
    font-size: 16px;
    line-height: 24px;
    color: #777;
}
.bounce b {
    font-weight: 600;
    font-family: Inter, sans-serif;
    color: #212121;
}
.scroll-y {
    width: 11px;
    height: 188px;
    background: #c8c8c8;
}
.scroll-x {
    width: 557px;
    height: 11px;
    margin-top: 3px;
    background: #c8c8c8;
}

.side-panel {
    display: flex;
    flex-direction: column;
    align-items: center;
    gap: 16px;
    padding: 8px 0 0 2px;
    color: #111;
}
.side-panel button {
    width: 40px;
    height: 40px;
}
.side-panel hr {
    width: 20px;
    margin: 8px 0;
    border: none;
    border-top: 1px solid #dadce0;
}
.side-panel .collapse {
    height: 24px;
    margin-top: auto;
}
.cal-day {
    font: bold 8px Roboto, sans-serif;
    fill: #4285f4;
}

/* taskbar */
.taskbar {
    position: relative;
    display: grid;
    grid-template-columns: 1fr auto 1fr;
    align-items: center;
    height: 47px;
    padding: 0 0 1px 2px;
    background: #f2f2f2;
}
.apps {
    grid-column: 2;
    display: flex;
    gap: 4px;
}
.apps button {
    position: relative;
    width: 40px;
    height: 40px;
    border-radius: 4px;
    color: #222;
}
.running::after {
    content: "";
    position: absolute;
    bottom: 1px;
    width: 6px;
    height: 3px;
    border-radius: 2px;
    background: #888;
}
.apps .current {
    background: #fafafa;
}
.current::after {
    width: 16px;
    background: #0f6cbd;
}
.tray {
    display: flex;
    align-items: center;
    justify-content: flex-end;
    gap: 7px;
    padding-right: 19px;
    color: #222;
}
.clock {
    display: flex;
    flex-direction: column;
    align-items: flex-end;
    margin: 0 1px 0 4px;
    font: 11px/16px "Open Sans", sans-serif;
}
```
